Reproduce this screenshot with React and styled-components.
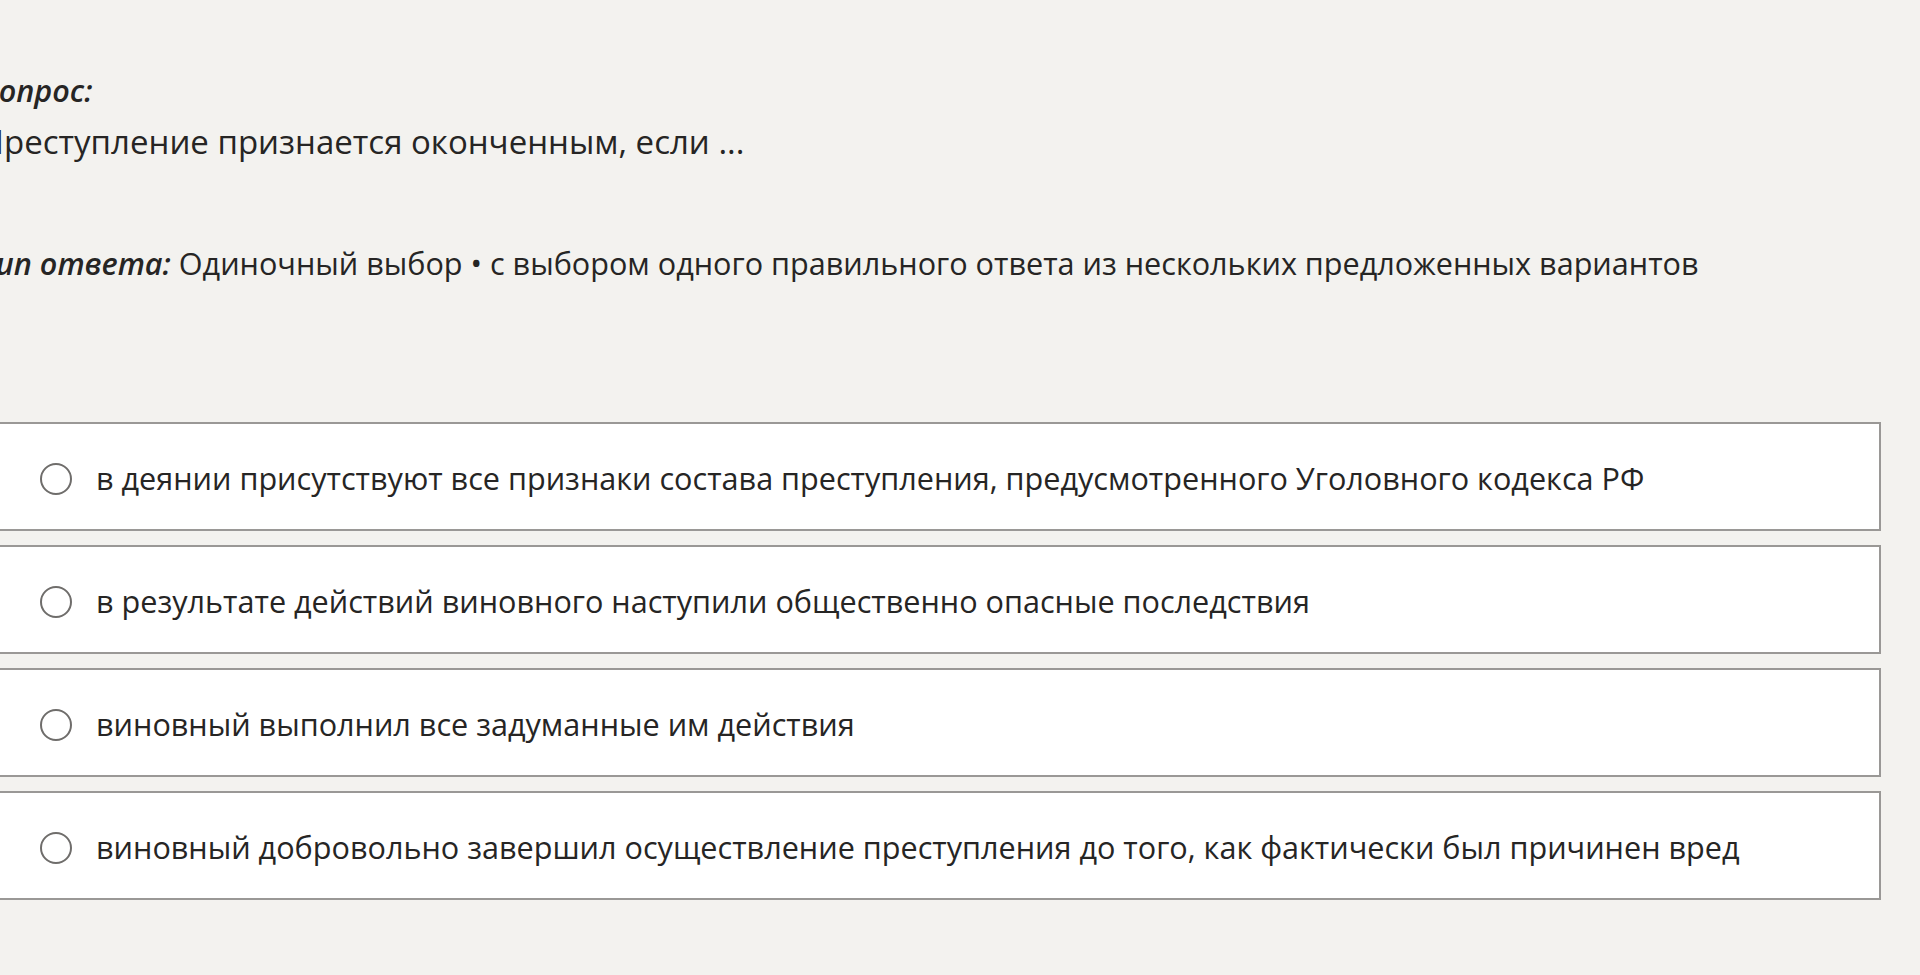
import React from 'react';
import styled, { createGlobalStyle } from 'styled-components';

const GlobalStyle = createGlobalStyle`
  html, body {
    margin: 0;
    padding: 0;
    background: #f3f2ef;
    overflow: hidden;
  }
  body {
    font-family: "Open Sans", "Noto Sans", "DejaVu Sans", sans-serif;
    color: #262524;
  }
`;

const answers = [
  'в деянии присутствуют все признаки состава преступления, предусмотренного Уголовного кодекса РФ',
  'в результате действий виновного наступили общественно опасные последствия',
  'виновный выполнил все задуманные им действия',
  'виновный добровольно завершил осуществление преступления до того, как фактически был причинен вред',
];

function App() {
  return (
    <>
      <GlobalStyle />
      <Page>
        <Label>Вопрос:</Label>
        <QuestionText>Преступление признается оконченным, если ...</QuestionText>

        <TypeRow>
          <Label as="span">Тип ответа:</Label> Одиночный выбор • с выбором одного правильного ответа из нескольких предложенных вариантов
        </TypeRow>

        <Options>
          {answers.map((text) => (
            <Option key={text}>
              <Radio />
              <OptionText>{text}</OptionText>
            </Option>
          ))}
        </Options>
      </Page>
    </>
  );
}

export default App;

const Page = styled.div`
  margin-left: -20px;
  padding: 65px 39px 0 0;
  font-size: 30.6px;
  line-height: 51px;
`;

const Label = styled.div`
  font-weight: 600;
  font-style: italic;
`;

const QuestionText = styled.div`
  font-size: 33px;
`;

const TypeRow = styled.div`
  margin-top: 71px;
  white-space: nowrap;
`;

const Options = styled.div`
  display: flex;
  flex-direction: column;
  gap: 14px;
  margin-top: 133px;
`;

const Option = styled.label`
  display: flex;
  align-items: center;
  box-sizing: border-box;
  height: 109px;
  padding: 4px 20px 0 58px;
  background: #ffffff;
  border: 2px solid #9a9896;
  cursor: pointer;
`;

const Radio = styled.span`
  flex: none;
  box-sizing: border-box;
  width: 32px;
  height: 32px;
  border-radius: 50%;
  border: 2px solid #6f6d6b;
  margin-right: 24px;
`;

const OptionText = styled.span`
  white-space: nowrap;
`;
